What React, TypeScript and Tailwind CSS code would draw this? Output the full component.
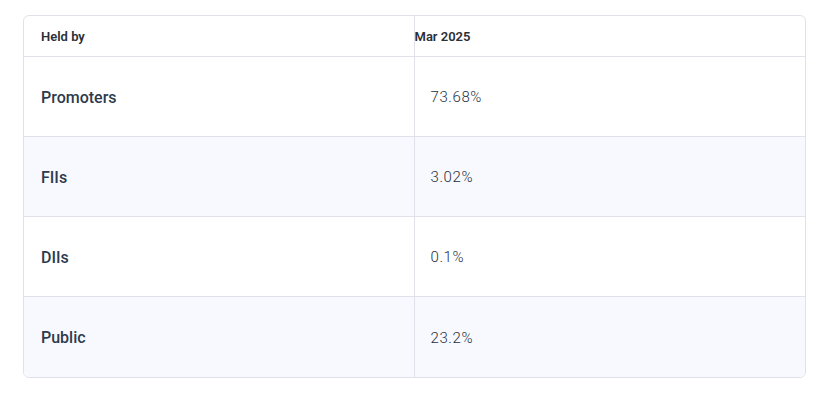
const rows = [
  { holder: 'Promoters', value: '73.68%' },
  { holder: 'FIIs', value: '3.02%' },
  { holder: 'DIIs', value: '0.1%' },
  { holder: 'Public', value: '23.2%' },
];

export default function App() {
  return (
    <div className="w-[821px] h-[400px] bg-white font-['Roboto',sans-serif] overflow-hidden">
      <div className="ml-[23px] mt-[15px] w-[783px] rounded-md border border-[#e1e1ec] overflow-hidden">
        {/* Header */}
        <div className="grid grid-cols-2 h-[41px] border-b border-[#e1e1ec]">
          <div className="flex items-center pl-[17px] pt-[1px] text-[13px] font-semibold text-[#2b2f36] border-r border-[#e1e1ec]">
            Held by
          </div>
          <div className="flex items-center pt-[1px] text-[13px] font-semibold text-[#2b2f36]">
            Mar 2025
          </div>
        </div>

        {/* Rows */}
        {rows.map((row, i) => (
          <div
            key={row.holder}
            className={
              'grid grid-cols-2 h-[80px] ' +
              (i % 2 === 1 ? 'bg-[#f8f9fe] ' : 'bg-white ') +
              (i < rows.length - 1 ? 'border-b border-[#e1e1ec]' : '')
            }
          >
            <div className="flex items-center pl-[17px] pt-[2px] text-[16px] font-medium text-[#2e3a4d] border-r border-[#e1e1ec]">
              {row.holder}
            </div>
            <div className="flex items-center pl-[16px] pt-[2px] text-[15px] tracking-[0.6px] font-light text-[#27303d]">
              {row.value}
            </div>
          </div>
        ))}
      </div>
    </div>
  );
}
